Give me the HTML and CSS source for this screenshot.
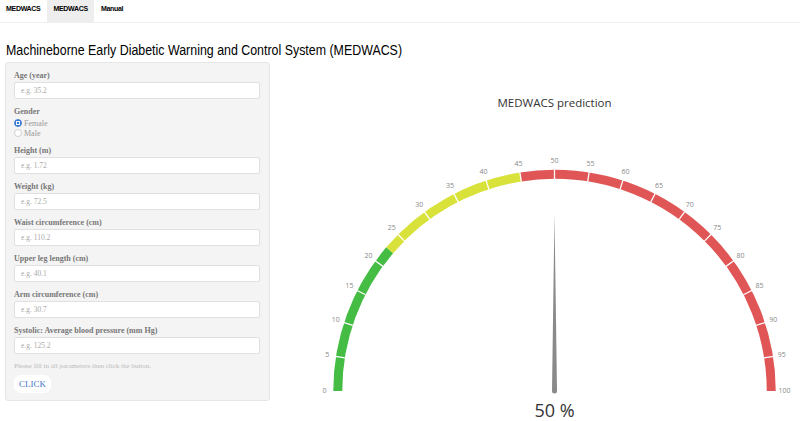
FILE: index.html
```html
<!DOCTYPE html>
<html lang="en">
<head>
  <meta charset="UTF-8" />
  <meta name="viewport" content="width=device-width, initial-scale=1.0"/>
  <title>MEDWACS</title>
  <link rel="stylesheet" href="styles.css">
</head>
<body>
  <nav class="navbar">
    <span class="brand">MEDWACS</span>
    <a class="tab active" href="#">MEDWACS</a>
    <a class="tab" href="#">Manual</a>
  </nav>

  <h2 class="title"><span>Machineborne Early Diabetic Warning and Control System (MEDWACS)</span></h2>

  <div class="row">
    <form class="well">
      <div class="group">
        <label>Age (year)</label>
        <input type="text" placeholder="e.g. 35.2">
      </div>
      <div class="group">
        <label>Gender</label>
        <div class="radio"><input type="radio" name="gender" checked> Female</div>
        <div class="radio"><input type="radio" name="gender"> Male</div>
      </div>
      <div class="group">
        <label>Height (m)</label>
        <input type="text" placeholder="e.g. 1.72">
      </div>
      <div class="group">
        <label>Weight (kg)</label>
        <input type="text" placeholder="e.g. 72.5">
      </div>
      <div class="group">
        <label>Waist circumference (cm)</label>
        <input type="text" placeholder="e.g. 110.2">
      </div>
      <div class="group">
        <label>Upper leg length (cm)</label>
        <input type="text" placeholder="e.g. 40.1">
      </div>
      <div class="group">
        <label>Arm circumference (cm)</label>
        <input type="text" placeholder="e.g. 30.7">
      </div>
      <div class="group">
        <label>Systolic: Average blood pressure (mm Hg)</label>
        <input type="text" placeholder="e.g. 125.2">
      </div>
      <p class="help">Please fill in all parameters then click the button.</p>
      <button type="button" class="btn">CLICK</button>
    </form>

    <svg class="gauge" width="530" height="359" viewBox="270 62 530 359">
      <text class="gauge-title" x="554.5" y="107">MEDWACS prediction</text>

      <!-- band: 0-22.5 green, 22.5-45 yellow, 45-100 red -->
      <path class="band green" pathLength="100" stroke-dasharray="22.5 200" d="M 337.75 391 A 216.75 216.75 0 0 1 771.25 391"/>
      <path class="band yellow" pathLength="100" stroke-dasharray="0 22.5 22.5 200" d="M 337.75 391 A 216.75 216.75 0 0 1 771.25 391"/>
      <path class="band red" pathLength="100" stroke-dasharray="0 45 55 200" d="M 337.75 391 A 216.75 216.75 0 0 1 771.25 391"/>

      <g class="ticks">
        <line x1="332.5" y1="391" x2="342.5" y2="391" transform="rotate(9 554.5 391)"/>
        <line x1="332.5" y1="391" x2="342.5" y2="391" transform="rotate(18 554.5 391)"/>
        <line x1="332.5" y1="391" x2="342.5" y2="391" transform="rotate(27 554.5 391)"/>
        <line x1="332.5" y1="391" x2="342.5" y2="391" transform="rotate(36 554.5 391)"/>
        <line x1="332.5" y1="391" x2="342.5" y2="391" transform="rotate(45 554.5 391)"/>
        <line x1="332.5" y1="391" x2="342.5" y2="391" transform="rotate(54 554.5 391)"/>
        <line x1="332.5" y1="391" x2="342.5" y2="391" transform="rotate(63 554.5 391)"/>
        <line x1="332.5" y1="391" x2="342.5" y2="391" transform="rotate(72 554.5 391)"/>
        <line x1="332.5" y1="391" x2="342.5" y2="391" transform="rotate(81 554.5 391)"/>
        <line x1="332.5" y1="391" x2="342.5" y2="391" transform="rotate(90 554.5 391)"/>
        <line x1="332.5" y1="391" x2="342.5" y2="391" transform="rotate(99 554.5 391)"/>
        <line x1="332.5" y1="391" x2="342.5" y2="391" transform="rotate(108 554.5 391)"/>
        <line x1="332.5" y1="391" x2="342.5" y2="391" transform="rotate(117 554.5 391)"/>
        <line x1="332.5" y1="391" x2="342.5" y2="391" transform="rotate(126 554.5 391)"/>
        <line x1="332.5" y1="391" x2="342.5" y2="391" transform="rotate(135 554.5 391)"/>
        <line x1="332.5" y1="391" x2="342.5" y2="391" transform="rotate(144 554.5 391)"/>
        <line x1="332.5" y1="391" x2="342.5" y2="391" transform="rotate(153 554.5 391)"/>
        <line x1="332.5" y1="391" x2="342.5" y2="391" transform="rotate(162 554.5 391)"/>
        <line x1="332.5" y1="391" x2="342.5" y2="391" transform="rotate(171 554.5 391)"/>
      </g>

      <g class="labels">
        <text transform="rotate(0 554.5 391) translate(324.5 391) rotate(0)">0</text>
        <text transform="rotate(9 554.5 391) translate(324.5 391) rotate(-9)">5</text>
        <text transform="rotate(18 554.5 391) translate(324.5 391) rotate(-18)">10</text>
        <text transform="rotate(27 554.5 391) translate(324.5 391) rotate(-27)">15</text>
        <text transform="rotate(36 554.5 391) translate(324.5 391) rotate(-36)">20</text>
        <text transform="rotate(45 554.5 391) translate(324.5 391) rotate(-45)">25</text>
        <text transform="rotate(54 554.5 391) translate(324.5 391) rotate(-54)">30</text>
        <text transform="rotate(63 554.5 391) translate(324.5 391) rotate(-63)">35</text>
        <text transform="rotate(72 554.5 391) translate(324.5 391) rotate(-72)">40</text>
        <text transform="rotate(81 554.5 391) translate(324.5 391) rotate(-81)">45</text>
        <text transform="rotate(90 554.5 391) translate(324.5 391) rotate(-90)">50</text>
        <text transform="rotate(99 554.5 391) translate(324.5 391) rotate(-99)">55</text>
        <text transform="rotate(108 554.5 391) translate(324.5 391) rotate(-108)">60</text>
        <text transform="rotate(117 554.5 391) translate(324.5 391) rotate(-117)">65</text>
        <text transform="rotate(126 554.5 391) translate(324.5 391) rotate(-126)">70</text>
        <text transform="rotate(135 554.5 391) translate(324.5 391) rotate(-135)">75</text>
        <text transform="rotate(144 554.5 391) translate(324.5 391) rotate(-144)">80</text>
        <text transform="rotate(153 554.5 391) translate(324.5 391) rotate(-153)">85</text>
        <text transform="rotate(162 554.5 391) translate(324.5 391) rotate(-162)">90</text>
        <text transform="rotate(171 554.5 391) translate(324.5 391) rotate(-171)">95</text>
        <text transform="rotate(180 554.5 391) translate(324.5 391) rotate(-180)">100</text>
      </g>

      <polygon class="needle" points="554.5,214 552,391 557,391"/>
      <circle class="needle" cx="554.5" cy="391" r="2.5"/>

      <text class="gauge-value" x="554.5" y="417">50 %</text>
    </svg>
  </div>
</body>
</html>
```

FILE: styles.css
```css
body { margin: 0; font-family: "Liberation Serif", serif; color: #777; background: #fff; }

.navbar {
  display: flex;
  height: 22px;
  border-bottom: 1px solid #eee;
  font-family: "Liberation Sans", sans-serif;
  font-weight: bold;
  font-size: 7px;
  letter-spacing: -0.3px;
}
.navbar .brand, .navbar .tab {
  padding: 3px 6.5px 7px;
  line-height: 12px;
  color: #000;
  text-decoration: none;
}
.navbar .brand { padding-left: 6px; }
.navbar .tab.active { background: #eee; }

/* narrow heading: Arial Narrow is Arial at 82% width */
.title {
  margin: 18px 0 3px 6px;
  font-family: "Liberation Sans", sans-serif;
  font-weight: normal;
  font-size: 15.5px;
  line-height: 18px;
  color: #000;
  white-space: nowrap;
}
.title span {
  display: inline-block;
  transform: scaleX(0.8);
  transform-origin: left center;
}

.row { display: flex; padding-left: 5px; }

.well {
  box-sizing: border-box;
  width: 265px;
  height: 339px;
  margin: 0;
  padding: 7px 9px 8px 8px;
  background: #f4f4f4;
  border: 1px solid #e6e6e6;
  border-radius: 3px;
}
.group { margin-bottom: 7px; }
.group label {
  display: block;
  font-weight: bold;
  font-size: 8px;
  line-height: 11px;
  margin-bottom: 1px;
  color: #777;
}
.group input[type=text] {
  display: block;
  box-sizing: border-box;
  width: 246px;
  height: 17px;
  margin: 0;
  padding: 0 6px;
  border: 1px solid #e0e0e0;
  border-radius: 2px;
  background: #fff;
  font-family: "Liberation Serif", serif;
  font-size: 7.5px;
}
.group input::placeholder { color: #aaa; }
.radio {
  display: flex;
  align-items: center;
  gap: 2px;
  height: 10px;
  font-size: 8px;
  color: #999;
}
.radio input {
  appearance: none;
  box-sizing: border-box;
  width: 8px;
  height: 8px;
  margin: 0;
  border: 1px solid #d0d0d0;
  border-radius: 50%;
  background: #fff;
}
.radio input:checked {
  border-color: #3a7bd5;
  background: radial-gradient(circle, #3a7bd5 0 1.4px, #fff 1.6px 2.3px, #3a7bd5 2.5px);
}
.help {
  margin: 0;
  font-size: 7px;
  line-height: 11px;
  color: #bbb;
}
.btn {
  display: block;
  margin-top: 3px;
  width: 37px;
  height: 18px;
  padding: 0;
  border: none;
  border-radius: 7px;
  background: #fff;
  color: #4577c8;
  font-family: "Liberation Serif", serif;
  font-size: 9px;
}

.gauge { display: block; }
.gauge-title {
  font-family: "Open Sans", sans-serif;
  font-size: 11.5px;
  fill: #333;
  text-anchor: middle;
}
.band { fill: none; stroke-width: 9; }
.band.green { stroke: #45bd45; }
.band.yellow { stroke: #d8e23b; }
.band.red { stroke: #e05555; }
.ticks line { stroke: #fff; stroke-width: 1.3; }
.labels text {
  font-family: "Open Sans", sans-serif;
  font-size: 7px;
  fill: #888;
  text-anchor: middle;
  dominant-baseline: middle;
}
.needle { fill: #8a8a8a; }
.gauge-value {
  font-family: "Open Sans", sans-serif;
  font-size: 18px;
  fill: #333;
  text-anchor: middle;
}
```
